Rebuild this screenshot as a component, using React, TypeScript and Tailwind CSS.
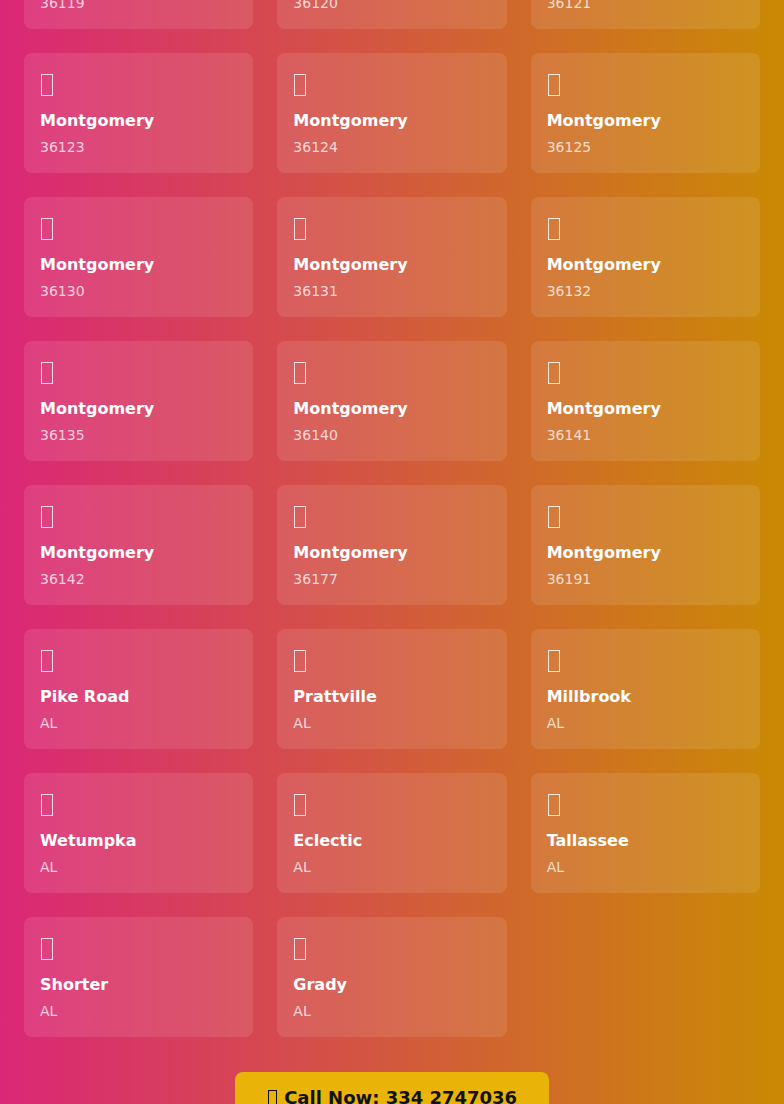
import React from "react";

type Place = { name: string; sub: string };

const places: Place[] = [
  { name: "Montgomery", sub: "36119" },
  { name: "Montgomery", sub: "36120" },
  { name: "Montgomery", sub: "36121" },
  { name: "Montgomery", sub: "36123" },
  { name: "Montgomery", sub: "36124" },
  { name: "Montgomery", sub: "36125" },
  { name: "Montgomery", sub: "36130" },
  { name: "Montgomery", sub: "36131" },
  { name: "Montgomery", sub: "36132" },
  { name: "Montgomery", sub: "36135" },
  { name: "Montgomery", sub: "36140" },
  { name: "Montgomery", sub: "36141" },
  { name: "Montgomery", sub: "36142" },
  { name: "Montgomery", sub: "36177" },
  { name: "Montgomery", sub: "36191" },
  { name: "Pike Road", sub: "AL" },
  { name: "Prattville", sub: "AL" },
  { name: "Millbrook", sub: "AL" },
  { name: "Wetumpka", sub: "AL" },
  { name: "Eclectic", sub: "AL" },
  { name: "Tallassee", sub: "AL" },
  { name: "Shorter", sub: "AL" },
  { name: "Grady", sub: "AL" },
];

function PlaceCard({ place }: { place: Place }) {
  return (
    <div className="rounded-lg bg-white/10 p-4 text-white">
      {/* missing-glyph box, as the pin emoji shows in the reference */}
      <div className="mb-2 flex h-8 items-center">
        <span className="ml-[1px] inline-block h-[22px] w-[12px] border border-white/80" />
      </div>
      <h3 className="text-base font-bold">{place.name}</h3>
      <p className="mt-1 text-sm text-white/75">{place.sub}</p>
    </div>
  );
}

export default function App() {
  return (
    <div
      className="min-h-screen overflow-hidden bg-[linear-gradient(to_right,#db2777,#ca8a04)]"
      style={{ fontFamily: '"DejaVu Sans", sans-serif' }}
    >
      <div className="-mt-[91px] px-6">
        <div className="grid grid-cols-3 gap-6">
          {places.map((p, i) => (
            <PlaceCard key={i} place={p} />
          ))}
        </div>
        <div className="mt-[35px] text-center">
          <button className="rounded-lg bg-[#eab308] px-8 py-3 text-lg font-bold text-[#111111]">
            <span className="mr-[1px] ml-[1px] inline-block h-[17px] w-[9px] border border-[#111111] align-[-3px]" />{" "}
            Call Now: 334 2747036
          </button>
        </div>
      </div>
    </div>
  );
}
